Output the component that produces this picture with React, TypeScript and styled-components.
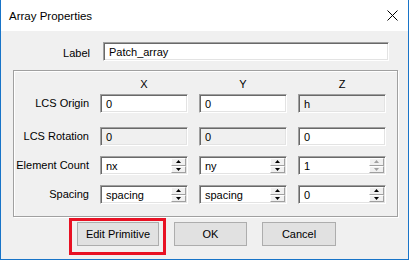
import React from 'react';
import styled, { createGlobalStyle } from 'styled-components';

const GlobalStyle = createGlobalStyle`
  html, body {
    margin: 0;
    padding: 0;
    background: #f0f0f0;
  }
  * {
    box-sizing: border-box;
  }
`;

const Window = styled.div`
  width: 409px;
  height: 260px;
  display: flex;
  flex-direction: column;
  border: 1px solid #1874c8;
  border-top: none;
  background: #f0f0f0;
  font-family: 'Liberation Sans', Arial, sans-serif;
  font-size: 11px;
  color: #000;
`;

const TitleBar = styled.div`
  height: 31px;
  background: #fff;
  display: flex;
  align-items: center;
  justify-content: space-between;
  padding: 0 10px 0 8px;
  font-size: 11.5px;
`;

const CloseIcon = () => (
  <svg width="11" height="11" viewBox="0 0 11 11">
    <path d="M0.5 0.5 L10.5 10.5 M10.5 0.5 L0.5 10.5" stroke="#000" strokeWidth="1" />
  </svg>
);

const Body = styled.div`
  flex: 1;
  display: flex;
  flex-direction: column;
  padding: 11px 11px 0 11px;
`;

const LabelRow = styled.div`
  display: flex;
  align-items: center;
  gap: 13px;
  height: 19px;
`;

const FieldLabel = styled.span<{ $width?: number }>`
  width: ${({ $width }) => $width ?? 77}px;
  text-align: right;
  white-space: nowrap;
  padding-top: 3px;
`;

const Edit = styled.div<{ $disabled?: boolean; $width?: number }>`
  width: ${({ $width }) => ($width ? `${$width}px` : '88px')};
  height: 19px;
  display: flex;
  align-items: stretch;
  background: ${({ $disabled }) => ($disabled ? '#f0f0f0' : '#fff')};
  border: 1px solid;
  border-color: #a0a0a0 #fff #fff #a0a0a0;
  box-shadow: inset 1px 1px 0 #696969, inset -1px -1px 0 #e3e3e3;
`;

const EditText = styled.span`
  flex: 1;
  display: flex;
  align-items: center;
  padding-left: 5px;
  padding-top: 1px;
  white-space: nowrap;
`;

const Spinner = styled.div`
  width: 16px;
  display: flex;
  flex-direction: column;
  padding: 1px 1px 1px 0;
`;

const SpinButton = styled.div<{ $disabled?: boolean }>`
  flex: 1;
  display: flex;
  align-items: center;
  justify-content: center;
  background: #f0f0f0;
  border: 1px solid;
  border-color: #fff #a0a0a0 #a0a0a0 #fff;
  color: ${({ $disabled }) => ($disabled ? '#a0a0a0' : '#000')};
`;

const Arrow = ({ up }: { up?: boolean }) => (
  <svg width="5" height="3" viewBox="0 0 5 3">
    <path d={up ? 'M2.5 0 L5 3 L0 3 Z' : 'M0 0 L5 0 L2.5 3 Z'} fill="currentColor" />
  </svg>
);

const GroupBox = styled.div`
  margin: 9px 0 0 1px;
  width: 385px;
  border: 1px solid #a0a0a0;
  box-shadow: 1px 1px 0 #fff, inset 1px 1px 0 #fff;
  padding: 7px 0 12px 0;
`;

const Grid = styled.div`
  display: grid;
  grid-template-columns: 75px 88px 88px 88px;
  grid-template-rows: 16px 33px 29px 29px 19px;
  column-gap: 11px;
  align-items: start;
`;

const ColHead = styled.span`
  text-align: center;
  line-height: 13px;
`;

const ButtonRow = styled.div`
  display: flex;
  align-items: flex-start;
  margin-top: 1px;
  padding-left: 57px;
`;

const Highlight = styled.div`
  border: 3px solid #e81123;
  padding: 1px 4px 6px 5px;
`;

const DialogButtons = styled.div`
  display: flex;
  gap: 15px;
  padding: 4px 0 0 8px;
`;

const Button = styled.div<{ $width: number }>`
  width: ${({ $width }) => $width}px;
  height: 24px;
  display: flex;
  align-items: center;
  justify-content: center;
  background: #e1e1e1;
  border: 1px solid #adadad;
`;

type Cell = { text: string; disabled?: boolean; spin?: boolean; spinDisabled?: boolean };

const rows: { label: string; cells: Cell[] }[] = [
  { label: 'LCS Origin', cells: [{ text: '0' }, { text: '0' }, { text: 'h', disabled: true }] },
  { label: 'LCS Rotation', cells: [{ text: '0', disabled: true }, { text: '0', disabled: true }, { text: '0' }] },
  {
    label: 'Element Count',
    cells: [
      { text: 'nx', spin: true },
      { text: 'ny', spin: true },
      { text: '1', spin: true, spinDisabled: true },
    ],
  },
  {
    label: 'Spacing',
    cells: [
      { text: 'spacing', spin: true },
      { text: 'spacing', spin: true },
      { text: '0', spin: true },
    ],
  },
];

const Field: React.FC<{ cell: Cell }> = ({ cell }) => (
  <Edit $disabled={cell.disabled}>
    <EditText>{cell.text}</EditText>
    {cell.spin && (
      <Spinner>
        <SpinButton $disabled={cell.spinDisabled}>
          <Arrow up />
        </SpinButton>
        <SpinButton $disabled={cell.spinDisabled}>
          <Arrow />
        </SpinButton>
      </Spinner>
    )}
  </Edit>
);

const App: React.FC = () => {
  return (
    <>
      <GlobalStyle />
      <Window>
        <TitleBar>
          <span>Array Properties</span>
          <CloseIcon />
        </TitleBar>
        <Body>
          <LabelRow>
            <FieldLabel $width={78}>Label</FieldLabel>
            <Edit $width={286}>
              <EditText>Patch_array</EditText>
            </Edit>
          </LabelRow>

          <GroupBox>
            <Grid>
              <span />
              <ColHead>X</ColHead>
              <ColHead>Y</ColHead>
              <ColHead>Z</ColHead>
              {rows.map((row) => (
                <React.Fragment key={row.label}>
                  <FieldLabel $width={75}>{row.label}</FieldLabel>
                  {row.cells.map((cell, i) => (
                    <Field key={i} cell={cell} />
                  ))}
                </React.Fragment>
              ))}
            </Grid>
          </GroupBox>

          <ButtonRow>
            <Highlight>
              <Button $width={82}>Edit Primitive</Button>
            </Highlight>
            <DialogButtons>
              <Button $width={73}>OK</Button>
              <Button $width={74}>Cancel</Button>
            </DialogButtons>
          </ButtonRow>
        </Body>
      </Window>
    </>
  );
};

export default App;
